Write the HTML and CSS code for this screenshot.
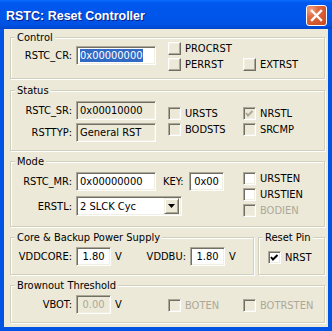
FILE: index.html
```html
<!DOCTYPE html>
<html lang="en">
<head>
  <meta charset="UTF-8">
  <title>RSTC: Reset Controller</title>
  <link rel="stylesheet" href="styles.css">
</head>
<body>
  <div class="window">
    <div class="titlebar">
      <span class="title">RSTC: Reset Controller</span>
      <span class="close">
        <svg width="19" height="19" viewBox="0 0 19 19"><path d="M5 5 L14 14 M14 5 L5 14" stroke="#fff" stroke-width="2.4" stroke-linecap="square"/></svg>
      </span>
    </div>

    <div class="client">
      <!-- Control -->
      <div class="group control">
        <div class="group-title">Control</div>
        <div class="group-body">
          <div class="fields">
            <div class="field"><span class="lbl">RSTC_CR:</span><div class="edit w80"><span class="sel">0x00000000</span></div></div>
          </div>
          <div class="checks">
            <div class="check"><span class="box raised"></span>PROCRST</div>
            <div class="check c1"><span class="box raised"></span>PERRST</div>
            <div class="check"><span class="box raised"></span>EXTRST</div>
          </div>
        </div>
      </div>

      <!-- Status -->
      <div class="group status">
        <div class="group-title">Status</div>
        <div class="group-body">
          <div class="fields">
            <div class="field"><span class="lbl">RSTC_SR:</span><div class="edit w80 ro">0x00010000</div></div>
            <div class="field"><span class="lbl">RSTTYP:</span><div class="edit w80 ro">General RST</div></div>
          </div>
          <div class="checks">
            <div class="check"><span class="box ro"></span>URSTS</div>
            <div class="check"><span class="box ro"><svg width="11" height="11" viewBox="0 0 11 11"><polyline points="2,5 4,7.5 8.5,3" fill="none" stroke="#aca899" stroke-width="2"/></svg></span>NRSTL</div>
            <div class="check"><span class="box ro"></span>BODSTS</div>
            <div class="check"><span class="box ro"></span>SRCMP</div>
          </div>
        </div>
      </div>

      <!-- Mode -->
      <div class="group mode">
        <div class="group-title">Mode</div>
        <div class="group-body">
          <div class="fields">
            <div class="field">
              <span class="lbl">RSTC_MR:</span><div class="edit w80">0x00000000</div>
              <span class="key-lbl">KEY:</span><div class="edit w35 center">0x00</div>
            </div>
            <div class="field">
              <span class="lbl">ERSTL:</span>
              <div class="combo">
                <span class="combo-text">2 SLCK Cyc</span>
                <span class="combo-btn"><svg width="7" height="4" viewBox="0 0 7 4"><path d="M0 0 H7 L3.5 4 Z" fill="#000"/></svg></span>
              </div>
            </div>
          </div>
          <div class="checks">
            <div class="check c2"><span class="box"></span>URSTEN</div>
            <div class="check c2"><span class="box"></span>URSTIEN</div>
            <div class="check c2 disabled"><span class="box ro"></span>BODIEN</div>
          </div>
        </div>
      </div>

      <div class="group-row">
        <!-- Core & Backup Power Supply -->
        <div class="group power">
          <div class="group-title">Core &amp; Backup Power Supply</div>
          <div class="group-body">
            <div class="field">
              <span class="lbl">VDDCORE:</span><div class="edit w35 center">1.80</div><span class="unit">V</span>
              <span class="lbl">VDDBU:</span><div class="edit w35 center">1.80</div><span class="unit">V</span>
            </div>
          </div>
        </div>

        <!-- Reset Pin -->
        <div class="group reset-pin">
          <div class="group-title">Reset Pin</div>
          <div class="group-body">
            <div class="check"><span class="box"><svg width="11" height="11" viewBox="0 0 11 11"><polyline points="2,5 4,7.5 8.5,3" fill="none" stroke="#000" stroke-width="2"/></svg></span>NRST</div>
          </div>
        </div>
      </div>

      <!-- Brownout Threshold -->
      <div class="group brownout">
        <div class="group-title">Brownout Threshold</div>
        <div class="group-body">
          <div class="fields">
            <div class="field"><span class="lbl">VBOT:</span><div class="edit w35 center ro disabled">0.00</div><span class="unit">V</span></div>
          </div>
          <div class="checks">
            <div class="check disabled"><span class="box ro"></span>BOTEN</div>
            <div class="check disabled"><span class="box ro"></span>BOTRSTEN</div>
          </div>
        </div>
      </div>
    </div>
  </div>
</body>
</html>
```

FILE: styles.css
```css
body {
  margin: 0;
  font-family: "DejaVu Sans Condensed", "DejaVu Sans", sans-serif;
  font-size: 11px;
  color: #000;
  background: #fff;
}

/* window frame */
.window {
  width: 332px;
  height: 331px;
  display: flex;
  flex-direction: column;
  background: #0054e3;
  box-sizing: border-box;
}

.titlebar {
  height: 29px;
  flex: none;
  display: flex;
  align-items: center;
  justify-content: space-between;
  padding: 0 5px 0 6px;
  background: linear-gradient(#0a6cff 0, #0058ee 10%, #0055ea 55%, #0052e4 85%, #0045cc 100%);
}

.title {
  margin-top: 2px;
  color: #fff;
  font-family: "Liberation Sans", sans-serif;
  font-weight: bold;
  font-size: 12.5px;
  text-shadow: 1px 1px #0a1d8a;
}

.close {
  width: 21px;
  height: 21px;
  margin-top: 2px;
  box-sizing: border-box;
  border: 1px solid #fff;
  border-radius: 3px;
  display: flex;
  align-items: center;
  justify-content: center;
  background: radial-gradient(circle at 20% 20%, #f0a282 0, #e0683f 35%, #c9451d 100%);
}

.client {
  flex: 1;
  margin: 0 4px 4px;
  padding: 8px 3px 0 6px;
  background: #ece9d8;
  display: flex;
  flex-direction: column;
  gap: 10px;
}

/* group boxes */
.group {
  box-sizing: border-box;
  border: 1px solid #d0d0bf;
  box-shadow: inset 1px 1px #fff, 1px 1px #fff;
}

.group-title {
  width: max-content;
  margin: -7px 0 -6px 4px;
  padding: 0 2px;
  line-height: 13px;
  background: #ece9d8;
}

.group-body {
  display: flex;
}

.control { height: 42px; }
.control .fields { margin-top: 8px; }
.control .checks { margin-top: 4px; }

.status { height: 61px; margin-top: 1px; }
.status .fields { margin-top: 10px; gap: 3px; }
.status .checks { margin-top: 16px; }

.mode { height: 66px; }
.mode .fields { margin-top: 10px; gap: 5px; }
.mode .checks { margin-top: 10px; }

.group-row {
  display: flex;
  gap: 4px;
}

.power { width: 244px; height: 38px; flex: none; }
.power .field { margin-top: 9px; }

.reset-pin { flex: 1; height: 38px; }
.reset-pin .check { margin: 13px 0 0 9px; }

.brownout { height: 38px; }
.brownout .fields { margin-top: 9px; }
.brownout .checks { margin-top: 13px; }

/* fields */
.fields {
  width: 157px;
  flex: none;
  display: flex;
  flex-direction: column;
}

.field {
  display: flex;
  align-items: center;
  width: max-content;
}

.lbl {
  width: 61px;
  margin-right: 4px;
  text-align: right;
  white-space: nowrap;
}

.key-lbl {
  width: 26px;
  margin-left: 7px;
}

.unit {
  width: 10px;
  margin-left: 4px;
}

.edit, .combo {
  height: 19px;
  box-sizing: border-box;
  border: 1px solid;
  border-color: #aca899 #fff #fff #aca899;
  box-shadow: inset 1px 1px #716f64, inset -1px -1px #f1efe2;
  background: #fff;
  padding: 0 3px;
  display: flex;
  align-items: center;
  white-space: nowrap;
}

.w80 { width: 80px; }
.w35 { width: 35px; }
.center { justify-content: center; }
.edit.ro { background: #ece9d8; }

.sel {
  background: #316ac5;
  color: #fff;
}

.combo {
  width: 106px;
  height: 20px;
  padding: 2px 2px 2px 2px;
  justify-content: space-between;
}

.combo-text {
  padding-left: 1px;
}

.combo-btn {
  width: 15px;
  height: 16px;
  box-sizing: border-box;
  border: 1px solid;
  border-color: #f1efe2 #716f64 #716f64 #f1efe2;
  box-shadow: inset 1px 1px #fff, inset -1px -1px #aca899;
  background: #ece9d8;
  display: flex;
  align-items: center;
  justify-content: center;
}

/* check boxes */
.checks {
  display: grid;
  grid-template-columns: 75px auto;
  grid-auto-rows: 16px;
}

.c1 { grid-column: 1; }
.c2 { grid-column: 2; }

.check {
  display: flex;
  align-items: center;
  gap: 4px;
  height: 13px;
  line-height: 13px;
  white-space: nowrap;
}

.box {
  width: 13px;
  height: 13px;
  flex: none;
  box-sizing: border-box;
  border: 1px solid;
  border-color: #aca899 #fff #fff #aca899;
  box-shadow: inset 1px 1px #716f64, inset -1px -1px #f1efe2;
  background: #fff;
}

.box svg { display: block; }

.box.ro { background: #ece9d8; }

.box.raised {
  border-color: #fff #716f64 #716f64 #fff;
  box-shadow: inset -1px -1px #aca899, inset 1px 1px #f1efe2;
  background: #ece9d8;
}

.disabled { color: #aca899; }
```
